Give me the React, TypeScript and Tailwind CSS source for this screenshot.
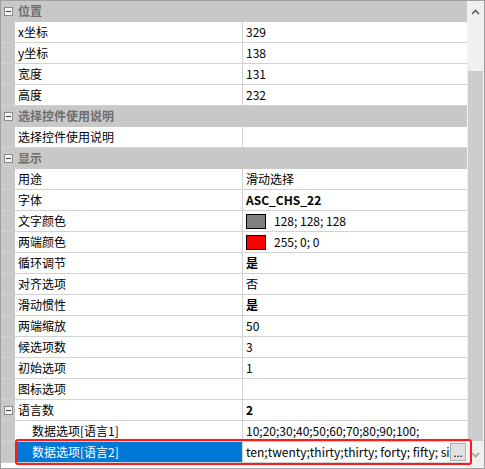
import React from 'react';

type Row = {
    kind: 'group' | 'prop';
    label: string;
    value?: string;
    bold?: boolean;
    swatch?: string;
    indent?: boolean;
    minus?: boolean;
    selected?: boolean;
};

const ROWS: Row[] = [
    { kind: 'group', label: '位置' },
    { kind: 'prop', label: 'x坐标', value: '329' },
    { kind: 'prop', label: 'y坐标', value: '138' },
    { kind: 'prop', label: '宽度', value: '131' },
    { kind: 'prop', label: '高度', value: '232' },
    { kind: 'group', label: '选择控件使用说明' },
    { kind: 'prop', label: '选择控件使用说明', value: '' },
    { kind: 'group', label: '显示' },
    { kind: 'prop', label: '用途', value: '滑动选择' },
    { kind: 'prop', label: '字体', value: 'ASC_CHS_22', bold: true },
    { kind: 'prop', label: '文字颜色', value: '128; 128; 128', swatch: 'bg-[#808080]' },
    { kind: 'prop', label: '两端颜色', value: '255; 0; 0', swatch: 'bg-[#ff0000]' },
    { kind: 'prop', label: '循环调节', value: '是', bold: true },
    { kind: 'prop', label: '对齐选项', value: '否' },
    { kind: 'prop', label: '滑动惯性', value: '是', bold: true },
    { kind: 'prop', label: '两端缩放', value: '50' },
    { kind: 'prop', label: '候选项数', value: '3' },
    { kind: 'prop', label: '初始选项', value: '1' },
    { kind: 'prop', label: '图标选项', value: '' },
    { kind: 'prop', label: '语言数', value: '2', bold: true, minus: true },
    { kind: 'prop', label: '数据选项[语言1]', value: '10;20;30;40;50;60;70;80;90;100;', indent: true },
    { kind: 'prop', label: '数据选项[语言2]', value: 'ten;twenty;thirty;thirty; forty; fifty; sixty;seventy', indent: true, selected: true },
];

const MinusBox = () => (
    <span className="flex items-center justify-center w-[9px] h-[9px] border border-[#8c8c8c] bg-[#f4f4f4]">
        <span className="block w-[5px] h-px bg-[#3c3c3c]" />
    </span>
);

const App: React.FC = () => {
    return (
        <div className="relative w-[485px] h-[469px] bg-white border border-[#a0a0a0] flex overflow-hidden text-[12px] leading-[16px]" style={{ fontFamily: '"Noto Sans CJK SC", "Noto Sans", sans-serif' }}>
            <div className="w-[466px] shrink-0 flex flex-col">
                {ROWS.map((row, i) =>
                    row.kind === 'group' ? (
                        <div key={i} className="flex items-center h-[21px] shrink-0 bg-[#c8c8c8] border-b border-[#c8c8c8]">
                            <div className="w-[14px] flex justify-end pr-[2px]"><MinusBox /></div>
                            <span className="pl-[3px] font-bold text-[#6e6e6e]">{row.label}</span>
                        </div>
                    ) : (
                        <div key={i} className="flex h-[21px] shrink-0 border-b border-[#d2d2d2]">
                            <div className="w-[14px] shrink-0 bg-[#c8c8c8] flex items-center justify-end pr-[2px]">
                                {row.minus && <MinusBox />}
                            </div>
                            <div className={`w-[228px] shrink-0 flex items-center border-r border-[#d2d2d2] ${row.indent ? 'pl-[17px]' : 'pl-[3px]'} ${row.selected ? 'bg-[#0078d7] text-white' : 'text-black'}`}>
                                {row.label}
                            </div>
                            <div className="flex-1 flex items-center pl-[3px] min-w-0">
                                {row.swatch && (
                                    <span className={`w-[20px] h-[15px] border border-black mr-[8px] shrink-0 ${row.swatch}`} />
                                )}
                                <span className={`flex-1 min-w-0 whitespace-nowrap overflow-hidden ${row.bold ? 'font-bold' : ''}`}>{row.value}</span>
                                {row.selected && (
                                    <span className="mr-[1px] shrink-0 w-[16px] h-[18px] bg-[#e1e1e1] border border-[#adadad] flex items-end justify-center pb-[2px] text-[11px] leading-none text-black">...</span>
                                )}
                            </div>
                        </div>
                    )
                )}
            </div>

            <div className="w-[17px] shrink-0 bg-[#f0f0f0] flex flex-col items-center">
                <div className="h-[22px] shrink-0 flex items-center justify-center text-[#606060]">
                    <svg width="9" height="6" viewBox="0 0 9 6"><path d="M1 5 L4.5 1.5 L8 5" stroke="currentColor" strokeWidth="1.6" fill="none" /></svg>
                </div>
                <div className="mt-[48px] shrink-0 w-[15px] h-[370px] bg-[#cdcdcd]" />
                <div className="flex-1 flex items-center justify-center text-[#a0a0a0]">
                    <svg width="9" height="6" viewBox="0 0 9 6"><path d="M1 1 L4.5 4.5 L8 1" stroke="currentColor" strokeWidth="1.6" fill="none" /></svg>
                </div>
            </div>

            {/* red annotation frame around the selected row */}
            <div className="absolute left-[14px] top-[438px] w-[457px] h-[26px] border-[2.5px] border-[#ff1a1a] rounded-[3px] pointer-events-none" />
        </div>
    );
};

export default App;
